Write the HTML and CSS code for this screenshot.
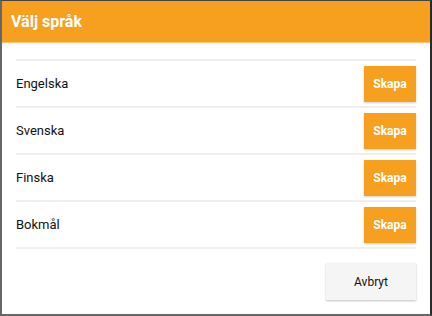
FILE: index.html
```html
<!DOCTYPE html>
<html lang="sv">
<head>
    <meta charset="UTF-8">
    <meta name="viewport" content="width=device-width, initial-scale=1.0">
    <title>Välj språk</title>
    <link rel="stylesheet" href="styles.css">
</head>
<body>
    <div class="dialog">
        <div class="header">Välj språk</div>
        <div class="content">
            <ul class="list">
                <li class="row"><span>Engelska</span><button class="create">Skapa</button></li>
                <li class="row"><span>Svenska</span><button class="create">Skapa</button></li>
                <li class="row"><span>Finska</span><button class="create">Skapa</button></li>
                <li class="row"><span>Bokmål</span><button class="create">Skapa</button></li>
            </ul>
            <div class="actions">
                <button class="cancel">Avbryt</button>
            </div>
        </div>
    </div>
</body>
</html>
```

FILE: styles.css
```css
html, body {
    margin: 0;
    height: 100%;
}
body {
    font-family: Roboto, "Liberation Sans", sans-serif;
    background-color: #555;
    color: #111;
}
.dialog {
    box-sizing: border-box;
    height: 316px;
    background-color: #fff;
    border-top: 1px solid #444;
    border-left: 2px solid #666;
    border-right: 2px solid #2a2a2a;
    border-bottom: 2px solid #666;
}
.header {
    height: 42px;
    box-sizing: border-box;
    padding: 0 9px;
    display: flex;
    align-items: center;
    background-color: #f79f1f;
    border-bottom: 1px solid #fbc46f;
    color: #fff;
    font-size: 16px;
    font-weight: bold;
}
.content {
    padding: 16px 14px 0;
}
.list {
    list-style: none;
    margin: 0;
    padding: 0;
    border-bottom: 2px solid #efefef;
}
.row {
    height: 45px;
    display: flex;
    align-items: center;
    justify-content: space-between;
    border-top: 2px solid #efefef;
    font-size: 13px;
}
.create {
    width: 52px;
    height: 36px;
    padding: 0;
    border: none;
    background-color: #f79f1f;
    color: #fff;
    font-family: inherit;
    font-size: 12px;
    font-weight: bold;
    box-shadow: 0 1px 2px rgba(0, 0, 0, 0.2);
    cursor: pointer;
}
.actions {
    display: flex;
    justify-content: flex-end;
    margin-top: 14px;
}
.cancel {
    width: 90px;
    height: 37px;
    border: none;
    background-color: #f5f5f5;
    color: #111;
    font-family: inherit;
    font-size: 12px;
    box-shadow: 0 1px 2px rgba(0, 0, 0, 0.25);
    cursor: pointer;
}
```
